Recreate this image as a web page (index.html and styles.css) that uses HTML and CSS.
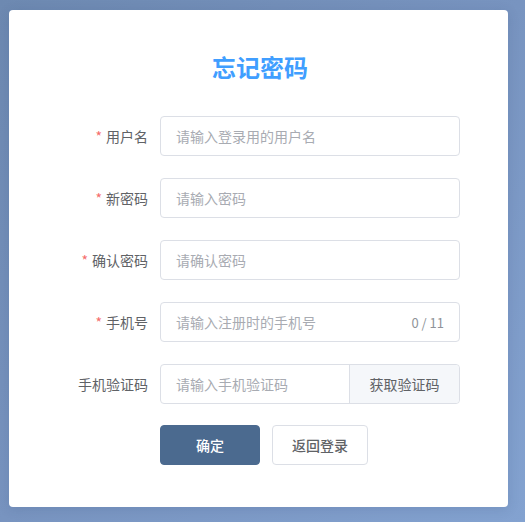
FILE: index.html
```html
<!DOCTYPE html>
<html lang="zh-CN">
<head>
<meta charset="utf-8">
<link rel="stylesheet" href="styles.css">
</head>
<body>
<div class="card">
  <h1 class="title">忘记密码</h1>
  <form class="form">
    <label class="label"><span class="req">*</span>用户名</label>
    <div class="input"><span class="ph">请输入登录用的用户名</span></div>

    <label class="label"><span class="req">*</span>新密码</label>
    <div class="input"><span class="ph">请输入密码</span></div>

    <label class="label"><span class="req">*</span>确认密码</label>
    <div class="input"><span class="ph">请确认密码</span></div>

    <label class="label"><span class="req">*</span>手机号</label>
    <div class="input"><span class="ph">请输入注册时的手机号</span><span class="count">0 / 11</span></div>

    <label class="label">手机验证码</label>
    <div class="input group"><span class="ph">请输入手机验证码</span><span class="append">获取验证码</span></div>

    <div class="spacer"></div>
    <div class="actions">
      <button type="button" class="btn primary">确定</button>
      <button type="button" class="btn plain">返回登录</button>
    </div>
  </form>
</div>
</body>
</html>
```
FILE: styles.css
```css
* { box-sizing: border-box; }
html, body { margin: 0; height: 100%; }
body {
  padding: 10px 17px 15px 9px;
  background: linear-gradient(135deg, #6d89b1 0%, #7894c0 50%, #83a2d0 100%);
  font-family: "Noto Sans CJK SC", "Noto Sans", sans-serif;
  font-size: 14px;
  color: #606266;
}
.card {
  width: 499px;
  height: 497px;
  background: #fff;
  border-radius: 4px;
  box-shadow: 0 2px 12px rgba(40, 60, 100, 0.15);
  padding: 40px 48px 42px 51px;
}
.title {
  margin: 0 0 32px;
  text-align: center;
  color: #409eff;
  font-size: 24px;
  line-height: 34px;
  font-weight: 700;
}
.form {
  width: 400px;
  display: grid;
  grid-template-columns: 100px 300px;
  row-gap: 22px;
}
.label {
  text-align: right;
  padding-right: 12px;
  line-height: 40px;
  height: 40px;
  color: #606266;
  white-space: nowrap;
}
.req { color: #f56c6c; margin-right: 4px; }
.input {
  height: 40px;
  border: 1px solid #dcdfe6;
  border-radius: 4px;
  display: flex;
  align-items: center;
  padding: 0 15px;
  background: #fff;
}
.ph { color: #a8abb2; flex: 1; white-space: nowrap; }
.count { color: #909399; font-size: 13px; }
.group { padding-right: 0; }
.append {
  width: 110px;
  height: 100%;
  background: #f5f7fa;
  border-left: 1px solid #dcdfe6;
  border-radius: 0 4px 4px 0;
  display: flex;
  align-items: center;
  justify-content: center;
  color: #606266;
}
.spacer { height: 1px; margin-top: -1px; }
.actions {
  display: flex;
  gap: 12px;
  margin-top: -1px;
}
.btn {
  font-family: inherit;
  font-size: 14px;
  font-weight: 500;
  height: 40px;
  border-radius: 4px;
  cursor: pointer;
}
.primary {
  width: 100px;
  background: #4b6a8f;
  border: 1px solid #4b6a8f;
  color: #fff;
}
.plain {
  width: 96px;
  background: #fff;
  border: 1px solid #dcdfe6;
  color: #606266;
}
```
